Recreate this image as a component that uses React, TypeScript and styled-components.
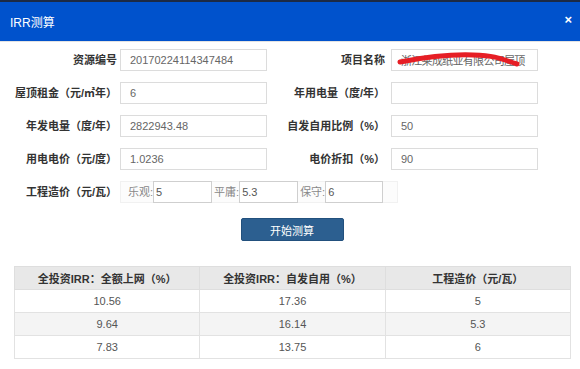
import styled, { createGlobalStyle } from 'styled-components';

const GlobalStyle = createGlobalStyle`
  body {
    margin: 0;
    background: #ffffff;
    font-family: 'Liberation Sans', 'Noto Sans CJK SC', sans-serif;
    font-size: 11px;
    color: #333;
  }
`;

const Modal = styled.div`
  width: 580px;
  height: 369px;
  overflow: hidden;
  background: #fff;
`;

const TopStrip = styled.div`
  height: 2px;
  background: #1c2a44;
`;

const Header = styled.div`
  height: 39px;
  background: #0052cc;
  border-bottom: 1px solid #e3e3e3;
  display: flex;
  align-items: center;
  justify-content: space-between;
  padding: 0 8px 0 10px;
  color: #fff;
`;

const Title = styled.h4`
  margin: 0;
  font-size: 12px;
  font-weight: normal;
  color: #fff;
`;

const Close = styled.button`
  all: unset;
  cursor: pointer;
  font-size: 13px;
  font-weight: bold;
  line-height: 1;
  color: #fff;
  margin-top: -5px;
`;

const Body = styled.div`
  padding-top: 7px;
`;

const FormGrid = styled.div`
  display: grid;
  grid-template-columns: 117px 147px 118px 147px;
  grid-auto-rows: 22px;
  column-gap: 3px;
  row-gap: 11px;
`;

const Label = styled.label<{ right?: boolean }>`
  font-weight: bold;
  text-align: right;
  line-height: 22px;
  white-space: nowrap;
  color: #333;
  padding-right: ${(p) => (p.right ? '3px' : '0')};
`;

const Field = styled.div`
  position: relative;
`;

const Input = styled.input<{ tight?: boolean }>`
  box-sizing: border-box;
  width: 100%;
  height: 22px;
  margin: 0;
  padding: 0 9px;
  border: 1px solid #dcdcdc;
  border-radius: 0;
  font: inherit;
  font-size: 11px;
  letter-spacing: ${(p) => (p.tight ? '-0.7px' : 'normal')};
  color: #666;
  background: #fff;
  outline: none;
`;

const Scribble = styled.svg`
  position: absolute;
  left: 0;
  top: 0;
  pointer-events: none;
`;

const CostGroup = styled.div`
  grid-column: 2 / span 3;
  width: 278px;
  display: flex;
  align-items: stretch;
  padding-left: 8px;
  box-sizing: border-box;
  background: #fcfcfc;
  box-shadow: inset 0 0 0 1px #f1f1f1;
`;

const CostLabel = styled.span<{ first?: boolean }>`
  color: #888;
  line-height: 22px;
  white-space: nowrap;
  margin-left: ${(p) => (p.first ? '0' : '2px')};
`;

const CostInput = styled.input<{ w: number }>`
  box-sizing: border-box;
  width: ${(p) => p.w}px;
  height: 22px;
  margin: 0;
  padding: 0 2px;
  border: 1px solid #cfcfcf;
  border-radius: 0;
  font: inherit;
  font-size: 11px;
  color: #555;
  outline: none;
`;

const ButtonRow = styled.div`
  display: flex;
  justify-content: center;
  padding-left: 4px;
  margin-top: 15px;
`;

const StartButton = styled.button`
  width: 103px;
  height: 23px;
  border: 1px solid #22507d;
  border-radius: 2px;
  background: #2c5f90;
  color: #fff;
  font: inherit;
  font-size: 11px;
  cursor: pointer;
`;

const Table = styled.table`
  margin: 25px 0 0 14px;
  width: 557px;
  border-collapse: collapse;
  table-layout: fixed;
`;

const Th = styled.th`
  height: 22px;
  padding: 0;
  border: 1px solid #dedede;
  background: #e8e8e8;
  font-weight: bold;
  color: #333;
  text-align: center;
`;

const Tr = styled.tr<{ striped?: boolean }>`
  background: ${(p) => (p.striped ? '#f4f4f4' : '#fff')};
`;

const Td = styled.td`
  height: 22px;
  padding: 0;
  border: 1px solid #e2e2e2;
  color: #555;
  text-align: center;
`;

const rows = [
  ['10.56', '17.36', '5'],
  ['9.64', '16.14', '5.3'],
  ['7.83', '13.75', '6'],
];

export default function App() {
  return (
    <>
      <GlobalStyle />
      <Modal>
        <TopStrip />
        <Header>
          <Title>IRR测算</Title>
          <Close>×</Close>
        </Header>
        <Body>
          <FormGrid>
            <Label>资源编号</Label>
            <Input defaultValue="20170224114347484" />
            <Label right>项目名称</Label>
            <Field>
              <Input tight defaultValue="浙江莱成纸业有限公司屋顶" />
              <Scribble width="147" height="22" viewBox="0 0 147 22">
                <path
                  d="M9 13 C 30 9, 56 5, 82 6 S 110 10, 126 15"
                  fill="none"
                  stroke="#e61e25"
                  strokeWidth="5"
                  strokeLinecap="round"
                />
              </Scribble>
            </Field>

            <Label>屋顶租金（元/㎡年）</Label>
            <Input defaultValue="6" />
            <Label right>年用电量（度/年）</Label>
            <Input defaultValue="" />

            <Label>年发电量（度/年）</Label>
            <Input defaultValue="2822943.48" />
            <Label right>自发自用比例（%）</Label>
            <Input defaultValue="50" />

            <Label>用电电价（元/度）</Label>
            <Input defaultValue="1.0236" />
            <Label right>电价折扣（%）</Label>
            <Input defaultValue="90" />

            <Label>工程造价（元/瓦）</Label>
            <CostGroup>
              <CostLabel first>乐观:</CostLabel>
              <CostInput w={59} defaultValue="5" />
              <CostLabel>平庸:</CostLabel>
              <CostInput w={59} defaultValue="5.3" />
              <CostLabel>保守:</CostLabel>
              <CostInput w={58} defaultValue="6" />
            </CostGroup>
          </FormGrid>

          <ButtonRow>
            <StartButton>开始测算</StartButton>
          </ButtonRow>

          <Table>
            <thead>
              <tr>
                <Th>全投资IRR：全额上网（%）</Th>
                <Th>全投资IRR：自发自用（%）</Th>
                <Th>工程造价（元/瓦）</Th>
              </tr>
            </thead>
            <tbody>
              {rows.map((r, i) => (
                <Tr key={i} striped={i === 1}>
                  {r.map((c, j) => (
                    <Td key={j}>{c}</Td>
                  ))}
                </Tr>
              ))}
            </tbody>
          </Table>
        </Body>
      </Modal>
    </>
  );
}
